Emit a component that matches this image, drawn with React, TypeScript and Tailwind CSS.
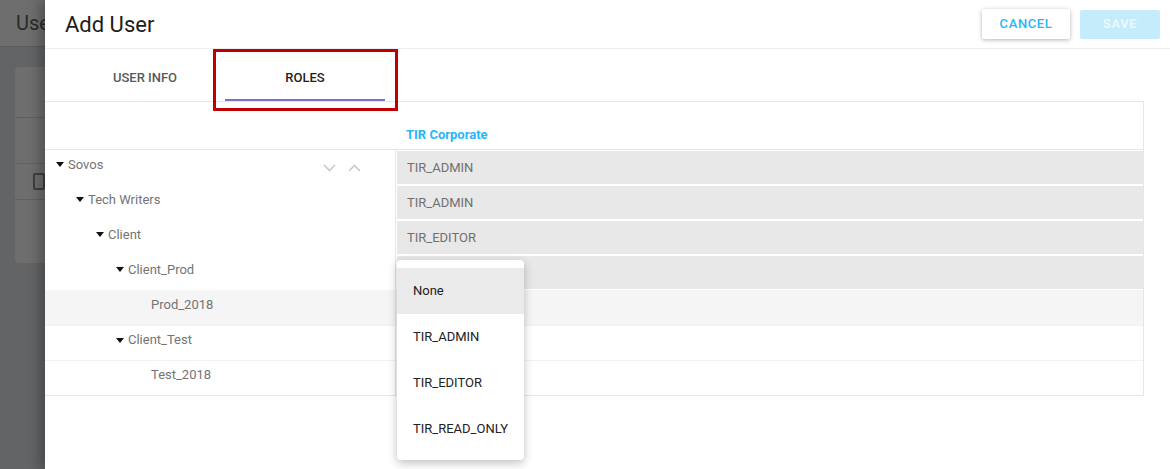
const tree = [
  { label: "Sovos", level: 0, leaf: false, role: "TIR_ADMIN" },
  { label: "Tech Writers", level: 1, leaf: false, role: "TIR_ADMIN" },
  { label: "Client", level: 2, leaf: false, role: "TIR_EDITOR" },
  { label: "Client_Prod", level: 3, leaf: false, role: "" },
  { label: "Prod_2018", level: 4, leaf: true, role: null },
  { label: "Client_Test", level: 3, leaf: false, role: null },
  { label: "Test_2018", level: 4, leaf: true, role: null },
];

const options = ["None", "TIR_ADMIN", "TIR_EDITOR", "TIR_READ_ONLY"];

function Caret() {
  return (
    <svg width="8" height="5" viewBox="0 0 8 5" className="mr-[4px] shrink-0">
      <path d="M0 0 L8 0 L4 5 Z" fill="#111" />
    </svg>
  );
}

function Chevron({ up }: { up?: boolean }) {
  return (
    <svg width="13" height="8" viewBox="0 0 13 8">
      <path
        d={up ? "M1 7 L6.5 1.5 L12 7" : "M1 1 L6.5 6.5 L12 1"}
        fill="none"
        stroke="#c9c9c9"
        strokeWidth="1.6"
      />
    </svg>
  );
}

export default function App() {
  return (
    <div className="flex w-[1170px] h-[469px] overflow-hidden bg-white font-['Roboto',sans-serif]">
      {/* page behind the drawer, dimmed */}
      <div className="w-[45px] shrink-0 flex flex-col bg-[#636465]">
        <div className="h-[47px] bg-[#6e6e6e] border-b border-[#5a5a5a] flex items-center pl-[16px] text-[20px] text-[#2a2a2a] whitespace-nowrap overflow-hidden">
          Use
        </div>
        <div className="ml-[15px] mt-[20px] h-[196px] rounded-l-[4px] bg-[#6e6e6e] flex flex-col">
          <div className="h-[51px] border-b border-[#5f5f5f]" />
          <div className="h-[46px] border-b border-[#5f5f5f]" />
          <div className="h-[36px] border-b border-[#5f5f5f] flex items-center pl-[18px]">
            <div className="w-[14px] h-[17px] border-2 border-[#3f3f3f] rounded-[2px]" />
          </div>
        </div>
      </div>

      {/* drawer */}
      <div className="flex-1 flex flex-col bg-white shadow-[-6px_0_10px_rgba(0,0,0,0.25)] z-10">
        <div className="h-[49px] shrink-0 border-b border-[#eceff1] flex items-center justify-between pl-[20px] pr-[10px]">
          <div className="text-[22px] text-[#1d1d1d]">Add User</div>
          <div className="flex items-center gap-[10px]">
            <button className="w-[88px] h-[30px] bg-white rounded-[2px] shadow-[0_1px_4px_rgba(0,0,0,0.3)] text-[13px] font-medium tracking-[0.6px] text-[#29b6f6]">
              CANCEL
            </button>
            <button className="w-[80px] h-[29px] bg-[#c5ecfb] rounded-[2px] text-[13px] font-bold tracking-[0.6px] text-[#eaf8fe]">
              SAVE
            </button>
          </div>
        </div>

        <div className="mr-[26px] flex flex-col relative">
          {/* tabs */}
          <div className="h-[52px] flex pl-[20px] relative">
            <div className="w-[160px] flex items-center justify-center pt-[5px] text-[13px] font-medium text-[#5a5a5a]">
              USER INFO
            </div>
            <div className="w-[160px] flex items-center justify-center pt-[5px] text-[13px] font-medium text-[#1f1f1f] relative">
              ROLES
              <div className="absolute left-0 right-0 bottom-0 h-[2px] bg-[#7773c6]" />
            </div>
            <div className="absolute left-[168px] top-0 w-[185px] h-[62px] border-[3px] border-[#c00000] z-20" />
          </div>

          {/* roles table */}
          <div className="relative border-t border-r border-b border-[#e6e6e6]">
            <div className="h-[47px] flex">
              <div className="w-[351px] shrink-0" />
              <div className="flex-1 flex items-end pb-[5px] pl-[10px] text-[13px] font-bold text-[#29b6f6]">
                TIR Corporate
              </div>
            </div>
            <div className="border-t border-[#e6e6e6]">
              {tree.map((row, i) => (
                <div
                  key={i}
                  className={`h-[35px] flex ${i === 4 ? "bg-[#f5f5f5]" : ""} ${i > 4 ? "border-t border-[#f1f1f1]" : ""}`}
                >
                  <div className="w-[351px] shrink-0 flex items-center border-r border-[#e6e6e6]">
                    <div
                      className="flex items-center pb-[6px] text-[13px] text-[#747474]"
                      style={{ paddingLeft: 11 + row.level * 20 + (row.leaf ? 15 : 0) }}
                    >
                      {!row.leaf && <Caret />}
                      <span>{row.label}</span>
                    </div>
                    {i === 0 && (
                      <div className="ml-auto mr-[34px] flex items-center gap-[12px]">
                        <Chevron />
                        <Chevron up />
                      </div>
                    )}
                  </div>
                  <div className="flex-1 flex py-[1px] pl-[1px]">
                    {row.role !== null && (
                      <div className="flex-1 bg-[#e8e8e8] flex items-center pl-[10px] text-[13px] text-[#707070]">
                        {row.role}
                      </div>
                    )}
                  </div>
                </div>
              ))}
            </div>

            {/* open role menu */}
            <div className="absolute left-[352px] top-[158px] w-[127px] py-[8px] bg-white rounded-[4px] shadow-[0_3px_10px_rgba(0,0,0,0.25)] z-30">
              {options.map((o, i) => (
                <div
                  key={o}
                  className={`h-[46px] flex items-center pl-[16px] text-[13px] text-[#222] ${i === 0 ? "bg-[#ebebeb]" : ""}`}
                >
                  {o}
                </div>
              ))}
            </div>
          </div>
        </div>
      </div>
    </div>
  );
}
